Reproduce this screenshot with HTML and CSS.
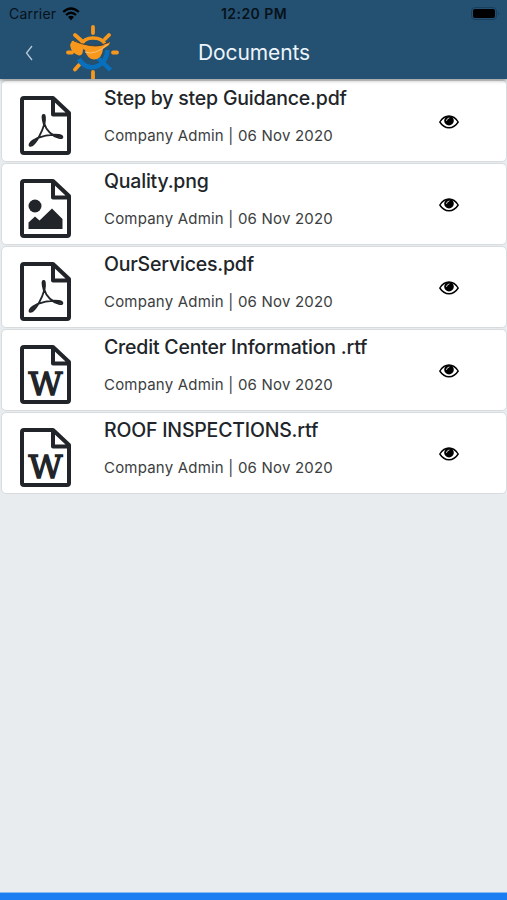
FILE: index.html
```html
<!DOCTYPE html>
<html lang="en">
<head>
    <meta charset="UTF-8">
    <meta name="viewport" content="width=device-width, initial-scale=1.0">
    <title>Documents</title>
    <link rel="stylesheet" href="styles.css">
</head>
<body>
<!-- Shared icons -->
<svg class="sprite" width="0" height="0">
    <symbol id="page" viewBox="0 0 51 59">
        <path d="M4 2H33L49 17V55Q49 57 47 57H4Q2 57 2 55V4Q2 2 4 2Z M33 2V18.500H49" fill="none" stroke="#212529" stroke-width="4" stroke-linejoin="round"/>
    </symbol>
    <symbol id="pdf" viewBox="0 0 51 59">
        <use href="#page"/>
        <path d="M24 19C22 18 22 22 24 29C22 36 17 46 12 49.500C9 51 8 48 13 44.500C20 40 31 38 39 39C44 40 43 43 39 42C32 40 26 34 24.500 28C25.500 22 25.500 20 24 19Z" fill="none" stroke="#212529" stroke-width="1.800" stroke-linejoin="round"/>
        <path d="M22.800 18.500H25.200V25H22.800ZM9.500 48L15 43L15.500 45L11.500 49.500ZM36 38.800L42 40V41.500L37 41.500Z" fill="#212529"/>
    </symbol>
    <symbol id="image" viewBox="0 0 51 59">
        <use href="#page"/>
        <circle cx="15" cy="27" r="6.500" fill="#212529"/>
        <path d="M8.500 50V43.500L15 37.500L19.500 41.500L32 29.500L42.500 40V50Z" fill="#212529"/>
    </symbol>
    <symbol id="eye" viewBox="0 0 20 14">
        <path d="M.8 7Q4.500 1 10 1T19.200 7Q15.500 12.800 10 12.800T.8 7Z" fill="none" stroke="#000" stroke-width="1.400"/>
        <circle cx="10" cy="5.700" r="4.800"/>
        <path d="M7.500 5.500Q7.700 3.300 10 3" fill="none" stroke="#fff" stroke-width=".8" stroke-linecap="round"/>
    </symbol>
</svg>

<header class="header">
    <div class="status">
        <div class="carrier">
            <span>Carrier</span>
            <svg width="18" height="14" viewBox="0 0 18 14">
                <path d="M1.200 5Q9-2 16.800 5M4 8Q9 3.500 14 8" fill="none" stroke="#000" stroke-width="2.300"/>
                <path d="M6 10Q9 7.500 12 10L9 13.200Z"/>
            </svg>
        </div>
        <span class="time">12:20 PM</span>
        <div class="battery">
            <svg width="29" height="13" viewBox="0 0 29 13">
                <rect x=".5" y=".5" width="25" height="12" rx="3.500" fill="none" stroke="#183f5d"/>
                <rect x="2" y="2" width="22" height="9" rx="2"/>
                <path d="M27 4.500Q29 6.500 27 8.500Z" fill="#183f5d"/>
            </svg>
        </div>
    </div>
    <div class="navbar">
        <svg class="back" width="9" height="16" viewBox="0 0 9 16">
            <path d="M7 1L1.500 8L7 15" fill="none" stroke="#b9cbd8" stroke-width="1.300"/>
        </svg>
        <svg class="logo" width="54" height="54" viewBox="0 0 54 54">
            <g fill="none" stroke="#f7981d" stroke-width="3.800" stroke-linecap="round">
                <path d="M27 2V8M27 47V54M2 27.500H6M47 27.500H51M43 10L39 14M13 40L9 44.500M9 10L17 17"/>
                <path d="M15 20Q18 13 27 13T39 19" stroke-width="3.500"/>
            </g>
            <path d="M13 34C19 47 40 45 41.500 25" fill="none" stroke="#0870bd" stroke-width="4.500"/>
            <path d="M30 31L44.500 45" stroke="#0870bd" stroke-width="4.500"/>
            <path d="M6 16Q10 15 13 18Q24 22 34 21Q40 20 44 17L43 20L37 24Q36 34 28 34.500Q21 34 19 25L17 24Q17 31 13 30.500Q5 28 4 20Z" fill="#f7981d"/>
            <path d="M8 16Q15 19 24 20.500T43 17" fill="none" stroke="#44403b" stroke-width="1"/>
            <path d="M19 27Q29 31 42 19" fill="none" stroke="#f8c17c" stroke-width="1"/>
        </svg>
        <h1 class="title">Documents</h1>
    </div>
</header>

<main class="documents">
    <div class="card">
        <svg class="file-icon"><use href="#pdf"/></svg>
        <div class="info">
            <h2 class="name">Step by step Guidance.pdf</h2>
            <p class="meta">Company Admin | 06 Nov 2020</p>
        </div>
        <svg class="view"><use href="#eye"/></svg>
    </div>
    <div class="card">
        <svg class="file-icon"><use href="#image"/></svg>
        <div class="info">
            <h2 class="name">Quality.png</h2>
            <p class="meta">Company Admin | 06 Nov 2020</p>
        </div>
        <svg class="view"><use href="#eye"/></svg>
    </div>
    <div class="card">
        <svg class="file-icon"><use href="#pdf"/></svg>
        <div class="info">
            <h2 class="name">OurServices.pdf</h2>
            <p class="meta">Company Admin | 06 Nov 2020</p>
        </div>
        <svg class="view"><use href="#eye"/></svg>
    </div>
    <div class="card">
        <svg class="file-icon" viewBox="0 0 51 59">
            <use href="#page"/>
            <text class="word-letter" x="8.500" y="50" textLength="34" lengthAdjust="spacingAndGlyphs">W</text>
        </svg>
        <div class="info">
            <h2 class="name">Credit Center Information .rtf</h2>
            <p class="meta">Company Admin | 06 Nov 2020</p>
        </div>
        <svg class="view"><use href="#eye"/></svg>
    </div>
    <div class="card">
        <svg class="file-icon" viewBox="0 0 51 59">
            <use href="#page"/>
            <text class="word-letter" x="8.500" y="50" textLength="34" lengthAdjust="spacingAndGlyphs">W</text>
        </svg>
        <div class="info">
            <h2 class="name">ROOF INSPECTIONS.rtf</h2>
            <p class="meta">Company Admin | 06 Nov 2020</p>
        </div>
        <svg class="view"><use href="#eye"/></svg>
    </div>
</main>
<footer class="bottom-bar"></footer>
</body>
</html>
```

FILE: styles.css
```css
* {
    box-sizing: border-box;
}
body {
    margin: 0;
    height: 900px;
    display: flex;
    flex-direction: column;
    overflow: hidden;
    font-family: Inter, "Liberation Sans", sans-serif;
    color: #212529;
    background-color: #e8ecef;
}
h1, h2, p {
    margin: 0;
}
svg {
    display: block;
    flex-shrink: 0;
}
.sprite {
    position: absolute;
}
.header {
    position: relative;
    height: 79px;
    background-color: #245072;
    box-shadow: 0 1px 4px rgba(0, 0, 0, 0.45);
}
.status {
    display: grid;
    grid-template-columns: 1fr auto 1fr;
    align-items: center;
    height: 25px;
    padding: 2px 7px 0 9px;
    font-size: 14px;
    color: #07121b;
}
.carrier {
    display: flex;
    align-items: center;
    gap: 6px;
    letter-spacing: 0.2px;
}
.time {
    font-weight: 600;
    letter-spacing: 0.45px;
    margin-left: -1px;
}
.battery {
    display: flex;
    justify-content: flex-end;
}
.navbar {
    display: grid;
    grid-template-columns: 41px 132px 1fr;
    align-items: center;
    height: 54px;
    padding-left: 25px;
}
.logo {
    align-self: start;
}
.title {
    padding-top: 1px;
    font-size: 21px;
    font-weight: 400;
    line-height: 54px;
    letter-spacing: -0.1px;
    color: #edf4fa;
}
.documents {
    flex: 1;
    padding: 1px 0 0 1px;
}
.card {
    display: grid;
    grid-template-columns: 84px 335px 1fr;
    align-items: start;
    height: 82px;
    margin-bottom: 1px;
    padding: 15px 0 0 18px;
    background-color: #fff;
    border: 1px solid #d9dcde;
    border-radius: 5px;
}
.file-icon {
    width: 51px;
    height: 59px;
    overflow: visible;
}
.word-letter {
    font-family: "DejaVu Serif", serif;
    font-size: 32px;
    font-weight: 400;
    fill: #212529;
    stroke: #212529;
    stroke-width: 1.4px;
}
.info {
    margin-top: -10px;
    white-space: nowrap;
}
.name {
    font-size: 19.5px;
    font-weight: 500;
    line-height: 24px;
    letter-spacing: -0.2px;
}
.meta {
    margin-top: 15px;
    font-size: 15px;
    line-height: 22px;
    letter-spacing: 0.2px;
    color: #3b3e40;
}
.view {
    width: 20px;
    height: 14px;
    margin-top: 19px;
}
.bottom-bar {
    height: 8px;
    background-color: #1c7cf2;
    border-top: 1px solid #8abaf0;
}
```
